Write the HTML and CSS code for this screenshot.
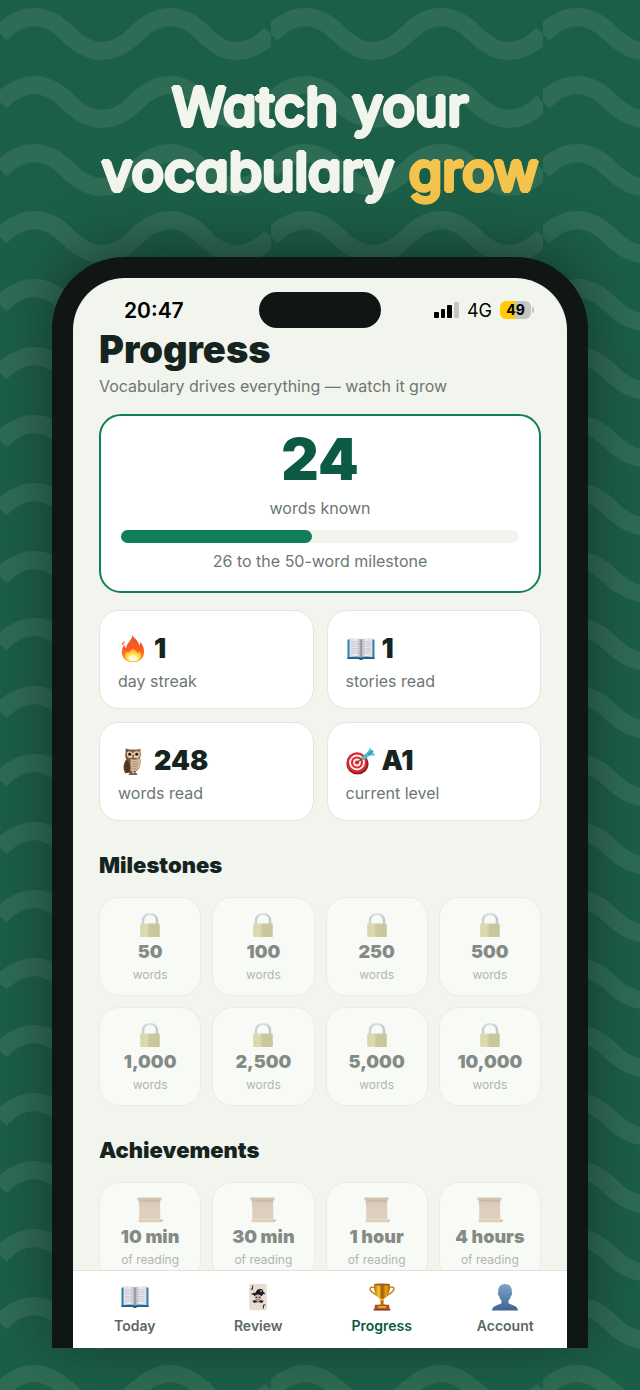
FILE: index.html
```html
<!DOCTYPE html>
<html lang="en">
<head>
  <meta charset="UTF-8">
  <meta name="viewport" content="width=device-width, initial-scale=1.0">
  <title>Watch your vocabulary grow</title>
  <link rel="stylesheet" href="styles.css">
</head>
<body>
  <!-- shared icons -->
  <svg class="sprite" aria-hidden="true">
    <defs>
      <linearGradient id="gFlame" x1="0" y1="0" x2="0" y2="1">
        <stop offset="0" stop-color="#f2542d"/>
        <stop offset=".5" stop-color="#fb5a1f"/>
        <stop offset="1" stop-color="#fc9a2c"/>
      </linearGradient>
      <radialGradient id="gFlameIn" cx=".5" cy=".8" r=".7">
        <stop offset="0" stop-color="#fffbd0"/>
        <stop offset=".5" stop-color="#ffe14d"/>
        <stop offset="1" stop-color="#ffa62b"/>
      </radialGradient>
      <linearGradient id="gPage" x1="0" y1="0" x2="1" y2="0">
        <stop offset="0" stop-color="#dcdce2"/>
        <stop offset=".6" stop-color="#ececf0"/>
        <stop offset="1" stop-color="#a9a9b4"/>
      </linearGradient>
      <linearGradient id="gPageR" x1="1" y1="0" x2="0" y2="0">
        <stop offset="0" stop-color="#dcdce2"/>
        <stop offset=".6" stop-color="#ececf0"/>
        <stop offset="1" stop-color="#a9a9b4"/>
      </linearGradient>
      <linearGradient id="gBrass" x1="0" y1="0" x2="1" y2="0">
        <stop offset="0" stop-color="#c2b86c"/>
        <stop offset=".3" stop-color="#cfc57c"/>
        <stop offset=".5" stop-color="#a59c54"/>
        <stop offset="1" stop-color="#a2984e"/>
      </linearGradient>
      <linearGradient id="gSteel" x1="0" y1="0" x2="1" y2="0">
        <stop offset="0" stop-color="#9fb0bf"/>
        <stop offset=".5" stop-color="#c9d4dd"/>
        <stop offset="1" stop-color="#8a9bab"/>
      </linearGradient>
      <linearGradient id="gGold" x1="0" y1="0" x2="1" y2="0">
        <stop offset="0" stop-color="#b96a05"/>
        <stop offset=".3" stop-color="#f9cd3f"/>
        <stop offset=".5" stop-color="#9c5604"/>
        <stop offset=".75" stop-color="#e9a514"/>
        <stop offset="1" stop-color="#a65c05"/>
      </linearGradient>
      <linearGradient id="gBust" x1="0" y1="0" x2="0" y2="1">
        <stop offset="0" stop-color="#7ba6cc"/>
        <stop offset="1" stop-color="#3f638f"/>
      </linearGradient>
      <linearGradient id="gScroll" x1="0" y1="0" x2="0" y2="1">
        <stop offset="0" stop-color="#b3937a"/>
        <stop offset=".3" stop-color="#cba88c"/>
        <stop offset="1" stop-color="#d0ad8f"/>
      </linearGradient>
      <linearGradient id="gOwl" x1="0" y1="0" x2="1" y2="0">
        <stop offset="0" stop-color="#6a4128"/>
        <stop offset="1" stop-color="#a2714c"/>
      </linearGradient>
    </defs>

    <symbol id="fire" viewBox="1 1 26 29">
      <path fill="url(#gFlame)" d="M13.500 1c1.200 3 6 5.500 7 10.500.8-.8 1.200-2 1-3.500 2.500 3 4 6.500 4 10.500C25.500 25 20.500 29 14 29S2.500 25 2.500 18.500c0-3 1-5.500 2.500-7.500.3 2 1 3 2 3.500C7 9.500 13 6.500 13.500 1z"/>
      <path fill="#f4683a" d="M4.200 8.200c-1.500.8-1.800 2.300-1.300 3.600.8-.9 1.600-1.700 2.400-2.900.2-.9-.2-1.600-1.100-.7z"/>
      <path fill="url(#gFlameIn)" d="M14 14c.6 2.800 4 3 4.700 6 .9-.4 1.300-1.300 1.500-2.500 1.400 1.700 2.200 3 2.200 5 0 3.600-3.700 6-8.200 6S5.800 26.300 5.800 22.500c0-2 .7-3.400 1.700-4.600.4 1 .9 1.500 1.700 1.800C9.600 17.500 13.600 17 14 14z"/>
      <ellipse cx="14" cy="25" rx="4.500" ry="3" fill="#fffce0" opacity=".8"/>
    </symbol>

    <symbol id="book" viewBox="-1 -2 30 28">
      <path fill="#2f7fae" d="M.5 2.500h27V22H.5z"/>
      <path fill="#1e5b82" d="M.5 20.500h27V22H16c-.5 1.300-3.500 1.300-4 0H.5z"/>
      <path fill="url(#gPage)" d="M2.500 1.500C7 .8 11.500 1 14 2.800V20.500C11.500 19.300 7 19.200 2.500 20z"/>
      <path fill="url(#gPageR)" d="M25.500 1.500C21 .8 16.500 1 14 2.800V20.500c2.500-1.200 7-1.300 11.500-.5z"/>
      <path fill="none" stroke="#a6a6b0" stroke-width=".5" d="M4.500 5h6.500M4.500 7.200h7M4.500 9.400h6M4.500 11.600h7M4.500 13.800h6.500M4.500 16h7M17 5h6.500M16.500 7.200h7M16.500 9.400h6M16.500 11.600h7M17 13.800h6.500M16.500 16h6"/>
      <path stroke="#7f7f8b" stroke-width=".8" d="M14 2.800v18"/>
    </symbol>

    <symbol id="owl" viewBox="0 0 28 30">
      <path fill="url(#gOwl)" d="M6 1.500c2.500 1 5 1.200 8 1.200s6-.2 8-1.200c.2 1.700-.2 3 .3 5 .5 2.300 0 3.800-.8 5.300 2 6-.5 12.700-5 14.700-4 1.500-8.500 1.200-11 1.500-1.500-3-2.500-7.500-.5-11.500.6-1.500 1.500-2.500 2-3.500C5.500 10.500 5.500 8.500 6 6.500c.3-2 0-3.500 0-5z"/>
      <path fill="#d3bba2" d="M11.500 12.500c3 1.700 6.500 1.500 9.500-.5 2 5.500 0 11.500-4.500 13.800-2.500.8-4.500.7-5.500.2z"/>
      <path fill="none" stroke="#8d6b50" stroke-width=".6" d="M13 16h6M13 18.500h6.500M12.500 21h6.500M12.500 23.500h5"/>
      <path fill="#553320" d="M6.500 14c4 2 5.500 6 4.500 12-.8 1-3 1.300-4 1.300C4.500 23 4.500 18 6.500 14z"/>
      <path fill="#dfcbb6" d="M7.500 5.500c2-1.500 5-1 6.500 1.500 1.500-2.500 4.700-3 7-1.500 1 3.500-.5 6.500-3.500 6.500-1.500 0-2.700-.6-3.500-1.500-1 .9-2 1.500-3.500 1.300C7.800 11.500 6.700 8.500 7.500 5.500z"/>
      <circle cx="10.500" cy="7.700" r="1.900" fill="#b9802a"/>
      <circle cx="18" cy="7.700" r="1.900" fill="#b9802a"/>
      <circle cx="10.500" cy="7.700" r="1.400" fill="#1a100a"/>
      <circle cx="18" cy="7.700" r="1.400" fill="#1a100a"/>
      <path fill="#3c2a20" d="M13.300 8.500h1.700l-.8 3z"/>
      <path fill="none" stroke="#3e2a1d" stroke-width="1.200" d="M12 26v2.500M16 26v2.500M9.500 29h9"/>
    </symbol>

    <symbol id="target" viewBox="0 0 30 28">
      <ellipse cx="11.500" cy="17" rx="11" ry="10.500" fill="#8e1c20"/>
      <circle cx="11" cy="15.500" r="10.300" fill="#d9272e"/>
      <circle cx="11" cy="15.500" r="7.900" fill="#f8ecec"/>
      <circle cx="11" cy="15.500" r="6" fill="#d9272e"/>
      <circle cx="11" cy="15.500" r="3.900" fill="#f8ecec"/>
      <circle cx="11" cy="15.500" r="2.100" fill="#d9272e"/>
      <path stroke="#8b3a2b" stroke-width="1.200" d="M11 15.500l8-6"/>
      <path stroke="#4fbcc8" stroke-width="4" stroke-linecap="round" d="M17.500 11l5-4"/>
      <path fill="#4fc6cf" d="M20.500 6.500l4-6 1.500 4zM22 9l7.500-.8-3-3.200z"/>
      <path fill="#2c93a6" d="M22 6.500L26.500 3l1 1.200-4.500 4z"/>
    </symbol>

    <symbol id="lock" viewBox="0 0 24 28">
      <path fill="none" stroke="url(#gSteel)" stroke-width="2.600" d="M4.500 14V9.500C4.500 5 7.500 2.300 12 2.300s7.500 2.700 7.500 7.200V14"/>
      <rect x="1.500" y="12.500" width="21" height="14.500" rx="1" fill="url(#gBrass)"/>
      <path stroke="#8d8337" stroke-width=".5" d="M1.500 16h21M1.500 19.500h21M1.500 23h21" opacity=".3"/>
    </symbol>

    <symbol id="scroll" viewBox="1 1 27 27">
      <path fill="url(#gScroll)" d="M2.600 4h22.600c-.5 7 .2 14 0 20H3.200c.6-7 0-14-.6-20z"/>
      <path fill="none" stroke="#b8967a" stroke-width=".4" d="M4 9h20M4 12h20M4 15h20M4 18h20M4 21h20" opacity=".6"/>
      <path fill="#b39278" d="M1.800 1.600h24c.9 0 .9 3-.2 3H2.400c-1.200 0-1.400-3-.6-3z"/>
      <path fill="#7f604c" d="M3 4.500h22V6L8 5.600z" opacity=".5"/>
      <path fill="#c9a789" d="M3 24.300h24c.8.500.7 2.300-.3 2.800H3.300c-.9-.6-1-2.300-.3-2.800z"/>
      <circle cx="26.500" cy="25.300" r="1" fill="#96735b"/>
    </symbol>

    <symbol id="joker" viewBox="0 0 20 30">
      <rect x=".5" y=".8" width="19" height="28.400" rx="1.800" fill="#e9ddd2"/>
      <path fill="none" stroke="#3a302d" stroke-width="1.200" d="M4.200 2.800v3c0 1.200-1.700 1.200-1.900.2M15.800 27.200v-3c0-1.200 1.700-1.200 1.900-.2"/>
      <path fill="#1f1d20" d="M2.500 12.500C4 10.500 6 10.500 7.500 10.500 8 7.500 10.500 6 13 6.500c2 .3 3 1.800 2.500 3.200 1.300.3 2 1.300 2.200 2.500-1.200-.7-2.200-.5-2.700.3l-1 1.500H6.200c-.7-1.700-2-2.200-3.700-1.500z"/>
      <circle cx="13.200" cy="8.500" r=".9" fill="#d7cdc5"/>
      <ellipse cx="10" cy="16" rx="3.700" ry="3.600" fill="#c8bbb4"/>
      <path fill="#1f1d20" d="M7.500 14.800h1.500v1.200H7.500zM11 14.800h1.500v1.200H11zM3.800 19l3.500-.6 2.700 2 2.700-2 3.500.6-2 2.500-2.500-1H8.300l-2.500 1z"/>
      <path stroke="#cf4b49" stroke-width="1.100" d="M8.200 18h3.600"/>
    </symbol>

    <symbol id="trophy" viewBox="0 0 28 30">
      <path fill="none" stroke="#c67f0a" stroke-width="1.500" d="M7 5.500C3.500 3.500.8 4.500 1.200 6.500c.5 3 4 5 8.300 7.300M21 5.500c3.500-2 6.200-1 5.800 1-.5 3-4 5-8.300 7.300"/>
      <path fill="url(#gGold)" d="M5.500 1.500h17c.3 7-1.500 13-6.500 15.500l-.5 5.500h-3L12 17C7 14.500 5.200 8.500 5.500 1.500z"/>
      <ellipse cx="14" cy="1.700" rx="8.500" ry="1.100" fill="#9c5a06"/>
      <ellipse cx="14" cy="18" rx="2.800" ry="1.100" fill="#f8bd2c"/>
      <path fill="url(#gGold)" d="M9.500 23.500c2-.3 3-1 3.500-2h2c.5 1 1.500 1.700 3.500 2z"/>
      <path fill="#b04c23" d="M6.500 23.200h15l.8 5.300H5.700z"/>
      <path fill="#e3a32a" d="M9.500 24.500h9v2.500h-9z"/>
      <path fill="#7e2f14" d="M5 28h18v1.500H5z"/>
    </symbol>

    <symbol id="bust" viewBox="0 0 28 30">
      <path fill="url(#gBust)" d="M14 1c4.600 0 7.300 3 7.300 7.500 0 .8-.1 1.200.2 1.800.5 1.500-.2 3.200-1.100 3.700-.5 2-1.300 3.500-2.600 4.700v2.800c1.500 2 9.700 2.300 10.200 8H0c.5-5.700 8.700-6 10.200-8v-2.800C8.900 17.500 8.100 16 7.600 14c-.9-.5-1.600-2.200-1.100-3.700.3-.6.200-1 .2-1.800C6.700 4 9.400 1 14 1z"/>
    </symbol>
  </svg>

  <main class="poster">
    <h1 class="headline">Watch your<br>vocabulary <em>grow</em></h1>

    <div class="phone">
      <div class="screen">
        <div class="status-bar">
          <span class="time">20:47</span>
          <span class="island"></span>
          <div class="status-icons">
            <svg class="signal" viewBox="0 0 25 18" aria-hidden="true">
              <rect x="0" y="11" width="5" height="6" rx="1"/>
              <rect x="7" y="8" width="4" height="9" rx="1"/>
              <rect x="13" y="4" width="5" height="13" rx="1"/>
              <rect class="off" x="20" y="1" width="5" height="16" rx="1"/>
            </svg>
            <span>4G</span>
            <span class="battery">49</span>
          </div>
        </div>

        <div class="content">
          <h2 class="page-title">Progress</h2>
          <p class="subtitle">Vocabulary drives everything — watch it grow</p>

          <section class="known-card">
            <strong class="known-count">24</strong>
            <p>words known</p>
            <div class="bar"><div class="bar-fill" style="width: 48%"></div></div>
            <p>26 to the 50-word milestone</p>
          </section>

          <section class="stats">
            <div class="stat">
              <div class="stat-value"><svg class="emoji"><use href="#fire"/></svg>1</div>
              <p>day streak</p>
            </div>
            <div class="stat">
              <div class="stat-value"><svg class="emoji"><use href="#book"/></svg>1</div>
              <p>stories read</p>
            </div>
            <div class="stat">
              <div class="stat-value"><svg class="emoji"><use href="#owl"/></svg>248</div>
              <p>words read</p>
            </div>
            <div class="stat">
              <div class="stat-value"><svg class="emoji"><use href="#target"/></svg>A1</div>
              <p>current level</p>
            </div>
          </section>

          <h3 class="section-title">Milestones</h3>
          <section class="badges">
            <div class="badge"><svg class="emoji"><use href="#lock"/></svg><strong>50</strong><span>words</span></div>
            <div class="badge"><svg class="emoji"><use href="#lock"/></svg><strong>100</strong><span>words</span></div>
            <div class="badge"><svg class="emoji"><use href="#lock"/></svg><strong>250</strong><span>words</span></div>
            <div class="badge"><svg class="emoji"><use href="#lock"/></svg><strong>500</strong><span>words</span></div>
            <div class="badge"><svg class="emoji"><use href="#lock"/></svg><strong>1,000</strong><span>words</span></div>
            <div class="badge"><svg class="emoji"><use href="#lock"/></svg><strong>2,500</strong><span>words</span></div>
            <div class="badge"><svg class="emoji"><use href="#lock"/></svg><strong>5,000</strong><span>words</span></div>
            <div class="badge"><svg class="emoji"><use href="#lock"/></svg><strong>10,000</strong><span>words</span></div>
          </section>

          <h3 class="section-title">Achievements</h3>
          <section class="badges">
            <div class="badge"><svg class="emoji"><use href="#scroll"/></svg><strong>10 min</strong><span>of reading</span></div>
            <div class="badge"><svg class="emoji"><use href="#scroll"/></svg><strong>30 min</strong><span>of reading</span></div>
            <div class="badge"><svg class="emoji"><use href="#scroll"/></svg><strong>1 hour</strong><span>of reading</span></div>
            <div class="badge"><svg class="emoji"><use href="#scroll"/></svg><strong>4 hours</strong><span>of reading</span></div>
          </section>
        </div>

        <nav class="tabs">
          <a href="#today"><svg class="emoji"><use href="#book"/></svg>Today</a>
          <a href="#review"><svg class="emoji"><use href="#joker"/></svg>Review</a>
          <a href="#progress" class="active"><svg class="emoji"><use href="#trophy"/></svg>Progress</a>
          <a href="#account"><svg class="emoji"><use href="#bust"/></svg>Account</a>
        </nav>
      </div>
    </div>
  </main>
</body>
</html>
```

FILE: styles.css
```css
* {
  box-sizing: border-box;
}

body {
  margin: 0;
  font-family: Inter, "Liberation Sans", sans-serif;
  color: #16241f;
}

h1, h2, h3, p {
  margin: 0;
}

.sprite {
  position: absolute;
  width: 0;
  height: 0;
}

.poster {
  display: flex;
  flex-direction: column;
  height: 100vh;
  padding: 74px 52px 42px;
  overflow: hidden;
  background-color: #1c5f48;
  background-image: url("data:image/svg+xml,%3Csvg xmlns='http://www.w3.org/2000/svg' viewBox='0 0 272 68' width='272' height='68'%3E%3Cpath d='M0 34Q34 0 68 34T136 34T204 34T272 34' fill='none' stroke='%23f2f5ee' stroke-opacity='.085' stroke-width='18'/%3E%3C/svg%3E");
  background-size: 42.4% auto;
}

/* the ring of shadows thickens the letters and rounds their ends */
.headline {
  margin-bottom: 53px;
  text-align: center;
  font-size: 54px;
  line-height: 65px;
  font-weight: 500;
  font-feature-settings: "cv11";
  color: #f2f5ec;
  text-shadow:
    2px 0 currentColor, -2px 0 currentColor,
    0 2px currentColor, 0 -2px currentColor,
    1px 1px currentColor, -1px 1px currentColor,
    1px -1px currentColor, -1px -1px currentColor;
}

.headline em {
  font-style: normal;
  color: #f5c44c;
}

/* phone */
.phone {
  position: relative;
  display: flex;
  flex: 1;
  min-height: 0;
  padding: 21px 21px 0;
  background: #101614;
  border-radius: 72px 72px 0 0;
  box-shadow: 0 -6px 60px rgba(14, 24, 20, 0.55);
}

.screen {
  display: flex;
  flex: 1;
  flex-direction: column;
  min-width: 0;
  background: #f2f5ee;
  border-radius: 52px 52px 0 0;
  overflow: hidden;
}

.status-bar {
  display: grid;
  grid-template-columns: 1fr 122px 1fr;
  align-items: center;
  padding-top: 14px;
  color: #000;
}

.time {
  padding-left: 51px;
  font-size: 21px;
  font-weight: 600;
}

.island {
  height: 36px;
  border-radius: 18px;
  background: #101614;
}

.status-icons {
  display: flex;
  align-items: center;
  justify-content: flex-end;
  gap: 8px;
  padding-right: 36px;
  font-size: 18px;
}

.signal {
  width: 25px;
  height: 18px;
}

.signal .off {
  fill: #c3c5c0;
}

.battery {
  position: relative;
  width: 31px;
  border-radius: 6px;
  background: linear-gradient(90deg, #ffcc02 50%, #c3c5c0 50%);
  text-align: center;
  font-size: 14px;
  line-height: 18px;
  font-weight: 700;
}

.battery::after {
  content: "";
  position: absolute;
  top: 6px;
  right: -3px;
  width: 2px;
  height: 6px;
  border-radius: 0 2px 2px 0;
  background: #c3c5c0;
}

/* progress page */
.content {
  flex: 1;
  min-height: 0;
  overflow: hidden;
  padding: 0 26px;
}

.content p {
  font-size: 16px;
  line-height: 22px;
  color: #6d7772;
}

.page-title {
  font-size: 38px;
  line-height: 42px;
  font-weight: 900;
}

.content .subtitle {
  margin: 5px 0 17px;
}

.known-card {
  padding: 13px 20px 19px;
  border: 2px solid #127d5b;
  border-radius: 22px;
  background: #fff;
  text-align: center;
}

.known-count {
  display: block;
  margin-bottom: 8px;
  font-size: 58px;
  line-height: 60px;
  font-weight: 900;
  color: #0b5a43;
}

.bar {
  height: 13px;
  margin: 11px 0 7px;
  border-radius: 7px;
  background: #f2f5ee;
}

.bar-fill {
  height: 100%;
  border-radius: 7px;
  background: #127d5b;
}

.stats {
  display: grid;
  grid-template-columns: 1fr 1fr;
  gap: 13px;
  margin-top: 17px;
}

.stat {
  padding: 22px 18px 16px;
  border: 1px solid #e2e6df;
  border-radius: 20px;
  background: #fff;
}

.stat-value {
  display: flex;
  align-items: center;
  gap: 6px;
  margin-bottom: 5px;
  font-size: 27px;
  line-height: 32px;
  font-weight: 900;
}

.emoji {
  width: 30px;
  height: 28px;
}

.section-title {
  margin: 30px 0 18px;
  font-size: 22px;
  line-height: 28px;
  font-weight: 900;
}

.badges {
  display: grid;
  grid-template-columns: repeat(4, 1fr);
  gap: 11px;
}

.badge {
  display: flex;
  flex-direction: column;
  align-items: center;
  padding: 14px 0 11px;
  border: 1px solid #e2e6df;
  border-radius: 20px;
  background: #fff;
  opacity: 0.5;
}

.badge .emoji {
  height: 26px;
}

.badge strong {
  font-size: 18px;
  line-height: 28px;
  font-weight: 900;
}

.badge span {
  font-size: 12px;
  line-height: 18px;
  color: #6d7772;
}

.tabs {
  display: grid;
  grid-template-columns: repeat(4, 1fr);
  padding: 12px 0 12px;
  border-top: 1px solid #dfe3dc;
  background: #fff;
}

.tabs a {
  display: flex;
  flex-direction: column;
  align-items: center;
  gap: 5px;
  font-size: 14px;
  line-height: 20px;
  font-weight: 600;
  color: #5c6863;
  text-decoration: none;
}

.tabs .active {
  color: #0b5a43;
}
```
